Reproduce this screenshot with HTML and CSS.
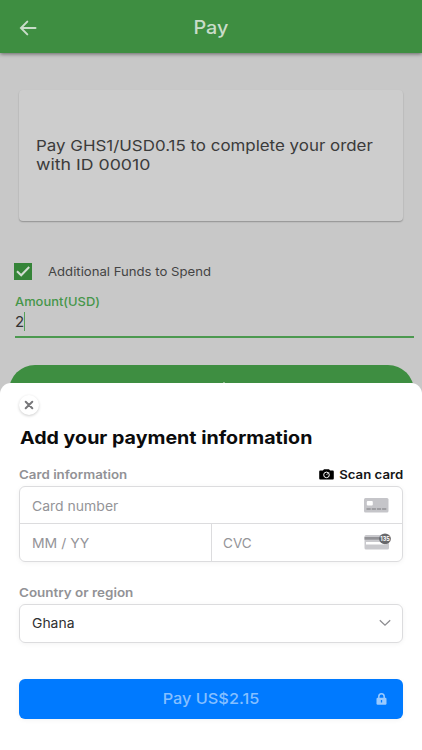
FILE: index.html
```html
<!DOCTYPE html>
<html lang="en">
<head>
<meta charset="utf-8">
<meta name="viewport" content="width=device-width, initial-scale=1">
<title>Pay</title>
<link rel="stylesheet" href="styles.css">
</head>
<body>
<div class="screen">
  <header class="bar">
    <svg class="back" viewBox="0 0 18 16" fill="none" stroke="currentColor" stroke-width="2" stroke-linecap="round"><path d="M16.5 8H2.5M8.3 1.6L2 8l6.3 6.4"/></svg>
    <h1><span class="t t-title">Pay</span></h1>
  </header>
  <main class="page">
    <section class="order">
      <div><span class="t t-order">Pay GHS1/USD0.15 to complete your order</span></div>
      <div><span class="t t-order2">with ID 00010</span></div>
    </section>
    <div class="funds">
      <svg class="check" viewBox="0 0 18 17"><path fill="#358438" d="M0 0h18v17H0z"/><path fill="none" stroke="#d2ddd2" stroke-width="2" d="M3 8.3l4.2 4L15.2 4"/></svg>
      <span class="t t-funds">Additional Funds to Spend</span>
    </div>
    <div class="amount">
      <div class="amount-label"><span class="t t-amount">Amount(USD)</span></div>
      <div class="amount-value"><span class="t t-two">2</span><i class="caret"></i></div>
    </div>
    <div class="submit"><i class="tick"></i></div>
  </main>
  <section class="sheet">
    <button class="close"><svg viewBox="0 0 10 10" fill="none" stroke="#77777a" stroke-width="2" stroke-linecap="round"><path d="M1.7 1.8l6.6 6.4M8.3 1.8l-6.6 6.4"/></svg></button>
    <h2><span class="t t-heading">Add your payment information</span></h2>
    <div class="row">
      <span class="t t-card label">Card information</span>
      <span class="scan">
        <svg class="camera" viewBox="0 0 15 11"><path d="M1.5 1.5h2.4L5 .3h5l1.1 1.2h2.4c.9 0 1.3.5 1.3 1.3v6.4c0 .9-.4 1.4-1.3 1.4h-12C.6 10.6.2 10.1.2 9.2V2.8c0-.8.4-1.3 1.3-1.3z"/><circle cx="7.5" cy="5.9" r="2.8" fill="none" stroke="#fff" stroke-width="1"/><path d="M7.5 5.9L10 3.4" stroke="#fff" stroke-width=".8"/></svg>
        <span class="t t-scan">Scan card</span>
      </span>
    </div>
    <div class="fields">
      <div class="field number"><span class="t t-number">Card number</span>
        <svg class="card-icon" viewBox="0 0 28 18"><rect x="1" y="2" width="24.5" height="14.5" rx="1.5" fill="#c5c5c9"/><rect x="3.8" y="5" width="6" height="4.5" rx="1" fill="#fff"/><path d="M3.5 13h20" stroke="#929296" stroke-width="1.3" stroke-dasharray="4.2 1"/></svg>
      </div>
      <div class="field date"><span class="t t-date">MM / YY</span></div>
      <div class="field cvc"><span class="t t-cvc">CVC</span>
        <svg class="card-icon" viewBox="0 0 28 18"><rect x="1.5" y="2" width="24.5" height="14.5" rx="1.5" fill="#c9c9cd"/><path fill="#939397" d="M1.5 4h24v2.7h-24z"/><path fill="#fff" d="M3 9h20v2.5H3z"/><ellipse cx="22" cy="5.8" rx="5.9" ry="5.4" fill="#68686b"/><text x="22" y="8" text-anchor="middle" class="digits">135</text></svg>
      </div>
    </div>
    <div class="region-label"><span class="t t-region label">Country or region</span></div>
    <div class="select"><span class="t t-ghana">Ghana</span><svg class="chevron" viewBox="0 0 12 8" fill="none" stroke="#8d8d91" stroke-width="1.3"><path d="M.8 1.2L6 6.2l5.2-5"/></svg></div>
    <button class="pay"><span class="t t-pay">Pay US$2.15</span>
      <svg class="lock" viewBox="0 0 11 12"><rect x=".5" y="4.8" width="10" height="7" rx="1.2" fill="#99caff"/><path d="M2.8 5V3.7a2.7 2.9 0 0 1 5.4 0V5" fill="none" stroke="#99caff" stroke-width="1.5"/><path d="M5.5 7v2.5" stroke="#007aff" stroke-width="1.3"/></svg>
    </button>
  </section>
</div>
</body>
</html>
```
FILE: styles.css
```css
* { box-sizing: border-box; }
body { margin: 0; font-family: Inter, "Liberation Sans", sans-serif; }
h1, h2 { margin: 0; font-weight: inherit; font-size: inherit; }
button { border: 0; padding: 0; font: inherit; }
svg { display: block; flex: none; }
.screen { width: 422px; height: 750px; overflow: hidden; background: #c8c8c8; display: flex; flex-direction: column; }
.t { display: inline-block; white-space: nowrap; transform-origin: 0 50%; }

.bar { height: 53px; flex: none; background: #3e8e41; color: #c9dcc9; display: grid; grid-template-columns: 60px 1fr 60px; box-shadow: 0 1px 4px rgba(0,0,0,.5); }
.back { width: 18px; height: 16px; margin: 20px 0 0 18.5px; }
.bar h1 { text-align: center; padding: 16px 0 0; line-height: 24px; }
.t-title { font-size: 18px; font-weight: 500; transform-origin: 50% 50%; transform: scaleX(1.1); }

.page { height: 329.5px; flex: none; overflow: hidden; }
.order { margin: 37px 18.6px 0 19.4px; height: 131px; padding: 46px 16.6px; background: #cdcdcd; border-radius: 4px; box-shadow: 0 1px 1.5px rgba(0,0,0,.28); color: #3b3b3b; font-size: 15px; line-height: 19px; }
.order div { height: 19px; }
.t-order { transform: scaleX(1.127); }
.t-order2 { transform: scaleX(1.18); }
.funds { display: flex; align-items: center; margin: 41px 0 0 14px; height: 18px; color: #444; font-size: 12px; }
.check { width: 18px; height: 17px; margin-right: 16px; }
.t-funds { transform: scaleX(1.095); }
.amount { margin: 14px 8.5px 0 15px; height: 44px; border-bottom: 2px solid #4c9950; }
.amount-label { height: 16px; line-height: 16px; font-size: 12px; font-weight: 500; color: #46964a; }
.t-amount { transform: scaleX(1.075); }
.amount-value { display: flex; align-items: center; height: 22px; font-size: 15px; color: #333; }
.t-two { width: 9px; }
.caret { width: 1px; height: 19px; background: #55a058; }
.submit { height: 60px; margin: 27px 8px 0 9px; border-radius: 26px; background: #3e8e41; padding: 17px 0 0 214px; }
.tick { display: block; width: 2px; height: 6px; background: #8fbb90; }

.sheet { flex: 1; background: #fff; border-radius: 11px 11px 0 0; padding: 12px 18.6px 0 19.4px; }
.close { width: 20px; height: 20px; border-radius: 50%; background: #fff; box-shadow: 0 1px 3px rgba(0,0,0,.2); display: grid; place-items: center; }
.close svg { width: 10px; height: 10px; }
.sheet h2 { margin: 10px 0 0 .6px; height: 25px; line-height: 25px; font-size: 18px; font-weight: 700; color: #0b0b0c; }
.t-heading { transform: scaleX(1.091); }
.row { display: flex; justify-content: space-between; align-items: center; height: 16px; margin-top: 17px; font-size: 12px; font-weight: 600; }
.label { color: #929296; font-weight: 600; }
.t-card { transform: scaleX(1.11); }
.scan { display: flex; align-items: center; gap: 11px; color: #161617; }
.camera { width: 15px; height: 11px; }
.t-scan { transform-origin: 100% 50%; transform: scaleX(1.1); }
.fields { margin-top: 3px; height: 76px; border: 1.5px solid #dcdcde; border-radius: 6px; display: grid; grid-template: 1fr 1fr / 1fr 1fr; box-shadow: 0 1px 5px rgba(0,0,0,.05); color: #949498; font-size: 13px; }
.field { display: flex; align-items: center; justify-content: space-between; padding: 2px 11px 0 11.6px; }
.number { grid-column: span 2; border-bottom: 1px solid #dcdcde; }
.cvc { border-left: 1px solid #dcdcde; padding-left: 11px; }
.t-number, .t-date { transform: scaleX(1.075); }
.t-cvc { transform: scaleX(1.04); }
.card-icon { width: 28px; height: 18px; margin-top: -2px; }
.digits { font-size: 5.5px; font-weight: 700; fill: #fff; }
.region-label { margin-top: 23px; height: 16px; line-height: 16px; font-size: 12px; }
.t-region { transform: scaleX(1.12); }
.select { margin-top: 3px; height: 39px; border: 1.5px solid #dcdcde; border-radius: 6px; padding: 0 11px 0 11.6px; display: flex; align-items: center; justify-content: space-between; font-size: 13px; color: #303032; box-shadow: 0 1px 5px rgba(0,0,0,.05); }
.t-ghana { transform: scaleX(1.07); }
.chevron { width: 12px; height: 8px; }
.pay { display: grid; grid-template-columns: 32px 1fr 32px; align-items: center; width: 100%; height: 40px; margin-top: 36px; border-radius: 6px; background: #007aff; color: #85bfff; font-size: 15px; font-weight: 500; box-shadow: 0 1px 5px rgba(0,0,0,.05); }
.t-pay { grid-column: 2; transform-origin: 50% 50%; transform: scaleX(1.085); }
.lock { width: 11px; height: 12px; margin-left: 5px; }
```
